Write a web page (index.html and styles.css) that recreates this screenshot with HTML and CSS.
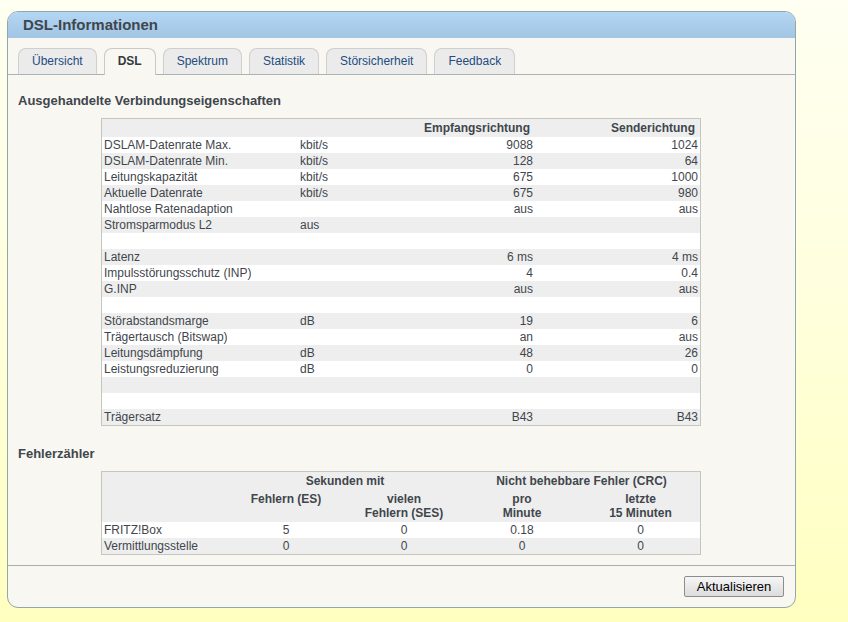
FILE: index.html
```html
<!DOCTYPE html>
<html lang="de">
<head>
<meta charset="utf-8">
<title>DSL-Informationen</title>
<link rel="stylesheet" href="styles.css">
</head>
<body>
<div class="panel">
  <div class="panel-head">DSL-Informationen</div>
  <div class="tabbar">
    <div class="tab">Übersicht</div>
    <div class="tab active">DSL</div>
    <div class="tab">Spektrum</div>
    <div class="tab">Statistik</div>
    <div class="tab">Störsicherheit</div>
    <div class="tab">Feedback</div>
  </div>
  <div class="content">
    <h2 class="section">Ausgehandelte Verbindungseigenschaften</h2>
    <table class="grid props">
      <colgroup><col class="c1"><col class="c2"><col class="c3"><col class="c4"></colgroup>
      <thead>
        <tr><th></th><th></th><th class="r">Empfangsrichtung</th><th class="r">Senderichtung</th></tr>
      </thead>
      <tbody>
        <tr><td>DSLAM-Datenrate Max.</td><td>kbit/s</td><td class="r">9088</td><td class="r">1024</td></tr>
        <tr><td>DSLAM-Datenrate Min.</td><td>kbit/s</td><td class="r">128</td><td class="r">64</td></tr>
        <tr><td>Leitungskapazität</td><td>kbit/s</td><td class="r">675</td><td class="r">1000</td></tr>
        <tr><td>Aktuelle Datenrate</td><td>kbit/s</td><td class="r">675</td><td class="r">980</td></tr>
        <tr><td>Nahtlose Ratenadaption</td><td></td><td class="r">aus</td><td class="r">aus</td></tr>
        <tr><td>Stromsparmodus L2</td><td>aus</td><td class="r"></td><td class="r"></td></tr>
        <tr><td></td><td></td><td></td><td></td></tr>
        <tr><td>Latenz</td><td></td><td class="r">6 ms</td><td class="r">4 ms</td></tr>
        <tr><td>Impulsstörungsschutz (INP)</td><td></td><td class="r">4</td><td class="r">0.4</td></tr>
        <tr><td>G.INP</td><td></td><td class="r">aus</td><td class="r">aus</td></tr>
        <tr><td></td><td></td><td></td><td></td></tr>
        <tr><td>Störabstandsmarge</td><td>dB</td><td class="r">19</td><td class="r">6</td></tr>
        <tr><td>Trägertausch (Bitswap)</td><td></td><td class="r">an</td><td class="r">aus</td></tr>
        <tr><td>Leitungsdämpfung</td><td>dB</td><td class="r">48</td><td class="r">26</td></tr>
        <tr><td>Leistungsreduzierung</td><td>dB</td><td class="r">0</td><td class="r">0</td></tr>
        <tr><td></td><td></td><td></td><td></td></tr>
        <tr><td></td><td></td><td></td><td></td></tr>
        <tr><td>Trägersatz</td><td></td><td class="r">B43</td><td class="r">B43</td></tr>
      </tbody>
    </table>

    <h2 class="section second">Fehlerzähler</h2>
    <table class="grid errors">
      <colgroup><col class="e1"><col class="e2"><col class="e2"><col class="e2"><col class="e5"></colgroup>
      <thead>
        <tr class="h1"><th></th><th colspan="2">Sekunden mit</th><th colspan="2">Nicht behebbare Fehler (CRC)</th></tr>
        <tr class="h2"><th></th><th>Fehlern (ES)</th><th>vielen<br>Fehlern (SES)</th><th>pro<br>Minute</th><th>letzte<br>15 Minuten</th></tr>
      </thead>
      <tbody>
        <tr><td class="l">FRITZ!Box</td><td>5</td><td>0</td><td>0.18</td><td>0</td></tr>
        <tr><td class="l">Vermittlungsstelle</td><td>0</td><td>0</td><td>0</td><td>0</td></tr>
      </tbody>
    </table>
  </div>
  <div class="footer">
    <button class="btn" type="button">Aktualisieren</button>
  </div>
</div>
</body>
</html>
```

FILE: styles.css
```css
html, body {
  margin: 0;
  padding: 0;
}
body {
  width: 848px;
  height: 622px;
  overflow: hidden;
  background: linear-gradient(to bottom, #fffff2 0%, #ffffdc 50%, #ffffc0 100%);
  font-family: "Liberation Sans", Arial, sans-serif;
  font-size: 12px;
  color: #3f464c;
}
.panel {
  box-sizing: border-box;
  width: 789px;
  height: 597px;
  margin: 11px 0 0 7px;
  border: 1px solid #91a8a8;
  border-radius: 11px;
  background: #f8f7f2;
  display: flex;
  flex-direction: column;
  overflow: hidden;
}
.panel-head {
  height: 26px;
  line-height: 26px;
  padding-left: 15px;
  font-size: 15px;
  font-weight: bold;
  color: #3f464c;
  background: linear-gradient(to bottom, #b3d6f5, #a1c5e3);
}
.tabbar {
  display: flex;
  gap: 7px;
  padding: 10px 0 0 10px;
  border-bottom: 1px solid #aab4b4;
  height: 26px;
}
.tab {
  box-sizing: border-box;
  height: 26px;
  line-height: 24px;
  padding: 0 13px;
  border: 1px solid #cfcfcf;
  border-bottom: none;
  border-radius: 8px 8px 0 0;
  background: #ebebeb;
  color: #234c80;
  font-size: 12px;
}
.tab.active {
  height: 27px;
  background: #f8f7f2;
  color: #333a40;
  font-weight: bold;
  border-color: #c8c8c8;
  position: relative;
  z-index: 1;
}
.content {
  flex: 1;
  padding: 18px 0 10px 0;
}
.section {
  margin: 0 0 9px 10px;
  font-size: 13px;
  line-height: 16px;
  font-weight: bold;
  color: #3f464c;
}
.section.second {
  margin-top: 20px;
}
.grid {
  width: 600px;
  margin: 0 0 0 93px;
  table-layout: fixed;
  border-collapse: separate;
  border-spacing: 0;
  border: 1px solid #c6c6c0;
  font-size: 12px;
  color: #3f464c;
}
.grid th, .grid td {
  padding: 0 2px;
  white-space: nowrap;
}
.grid tbody tr:nth-child(odd) td { background: #ffffff; }
.grid tbody tr:nth-child(even) td { background: #eeeeee; }
.grid thead th { background: #eeeeee; font-weight: bold; }
.props col.c1 { width: 196px; }
.props col.c2 { width: 102px; }
.props col.c3 { width: 135px; }
.props col.c4 { width: 165px; }
.props th {
  height: 18px;
  line-height: 18px;
  text-align: left;
}
.props td {
  height: 16px;
  line-height: 16px;
}
.props .r { text-align: right; }
.props th.r { padding-right: 5px; }

.errors col.e1 { width: 125px; }
.errors col.e2 { width: 118px; }
.errors col.e5 { width: 119px; }
.errors th {
  text-align: center;
  vertical-align: top;
  line-height: 14px;
}
.errors tr.h1 th { height: 14px; padding-top: 2px; padding-bottom: 2px; }
.errors tr.h2 th { height: 28px; padding-top: 2px; padding-bottom: 2px; }
.errors td {
  height: 16px;
  line-height: 16px;
  text-align: center;
}
.errors td.l { text-align: left; }

.footer {
  flex: 0 0 42px;
  height: 42px;
  border-top: 1px solid #a6b0b0;
  display: flex;
  justify-content: flex-end;
  align-items: flex-start;
  padding: 10px 11px 0 0;
  box-sizing: border-box;
}
.btn {
  box-sizing: border-box;
  height: 21px;
  width: 100px;
  padding: 0;
  border: 1px solid #8d8d8d;
  border-radius: 2px;
  background: linear-gradient(to bottom, #f6f6f6, #dcdcdc);
  font-family: "Liberation Sans", Arial, sans-serif;
  font-size: 13px;
  color: #000;
}
```
